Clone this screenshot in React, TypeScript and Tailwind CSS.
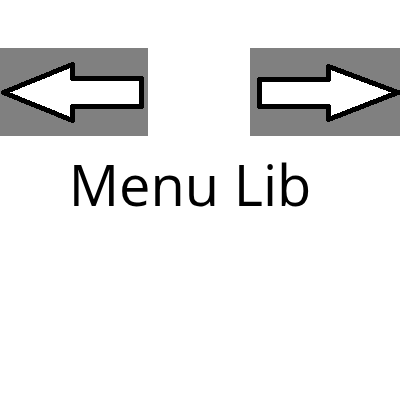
export default function App() {
  return (
    <main className="min-h-screen bg-white pt-12 text-black">
      <nav className="flex items-start justify-between" aria-label="Menu pages">
        <button type="button" aria-label="Previous" className="h-[88px] w-[148px] bg-[#808080]">
          <svg viewBox="0 0 148 88" className="block h-full w-full" shapeRendering="crispEdges" aria-hidden="true">
            <path d="M3.5 44.5L72.5 16.5V30.5H141.5V58.5H72.5V72.5Z" fill="#fff" stroke="#000" strokeWidth="5" strokeLinejoin="round" />
          </svg>
        </button>
        <button type="button" aria-label="Next" className="h-[88px] w-[150px] bg-[#808080]">
          <svg viewBox="0 0 150 88" className="block h-full w-full" shapeRendering="crispEdges" aria-hidden="true">
            <path d="M148 44.5L78.5 18.5V31.5H9.5V58.5H78.5V71.5Z" fill="#fff" stroke="#000" strokeWidth="5" strokeLinejoin="round" />
          </svg>
        </button>
      </nav>
      <h1 className="mt-3 pr-5 text-center font-['Open_Sans','Noto_Sans',sans-serif] text-[56px] leading-[72px] whitespace-nowrap">Menu Lib</h1>
    </main>
  );
}
